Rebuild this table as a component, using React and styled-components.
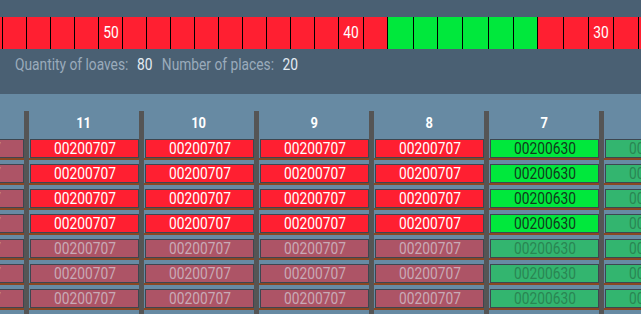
import React from "react";
import styled, { createGlobalStyle } from "styled-components";

const GlobalStyle = createGlobalStyle`
  body {
    margin: 0;
    background-color: #4a6073;
    font-family: Roboto, "Liberation Sans", sans-serif;
    overflow: hidden;
  }
`;

// left edges of the strip cells, in page pixels
const stripEdges = [
  -22, 2, 26, 50, 74, 98, 122, 146, 170, 194, 218, 242, 266, 290, 314, 338,
  363, 387, 413, 437, 462, 488, 513, 537, 563, 588, 613, 638, 663,
];
const stripCells = stripEdges.slice(0, -1).map((x, i) => ({
  num: 55 - i,
  width: stripEdges[i + 1] - x,
}));

const columns = [
  { num: 12, code: "00200707", color: "red", bright: 0 },
  { num: 11, code: "00200707", color: "red", bright: 4 },
  { num: 10, code: "00200707", color: "red", bright: 4 },
  { num: 9, code: "00200707", color: "red", bright: 4 },
  { num: 8, code: "00200707", color: "red", bright: 4 },
  { num: 7, code: "00200630", color: "green", bright: 4 },
  { num: 6, code: "00200630", color: "green", bright: 0 },
];

const cellColors = {
  red: { bg: "#ff1f31", fg: "#ffffff", dimBg: "#ad5466", dimFg: "#c8aab6" },
  green: { bg: "#00e83c", fg: "#113a1c", dimBg: "#33b56f", dimFg: "#2a8553" },
};

const App = () => {
  return (
    <Page>
      <GlobalStyle />
      <TopBar>
        <Strip>
          {stripCells.map((c) => (
            <StripCell
              key={c.num}
              $w={c.width}
              $green={c.num <= 38 && c.num >= 33}
            >
              {c.num % 10 === 0 && <Narrow>{c.num}</Narrow>}
            </StripCell>
          ))}
        </Strip>
        <Info>
          <InfoLine>
            <Label>Quantity of loaves:</Label>
            <Value>80</Value>
            <Label>Number of places:</Label>
            <Value>20</Value>
          </InfoLine>
        </Info>
      </TopBar>
      <Table>
        {columns.map((col) => (
          <Column key={col.num}>
            <Separator />
            <ColumnBody>
              <ColumnHead>
                <Narrow>{col.num}</Narrow>
              </ColumnHead>
              {Array.from({ length: 7 }).map((_, r) => {
                const p = cellColors[col.color];
                const lit = r < col.bright;
                return (
                  <Shelf key={r}>
                    <Cell $bg={lit ? p.bg : p.dimBg} $fg={lit ? p.fg : p.dimFg}>
                      <Narrow>{col.code}</Narrow>
                    </Cell>
                  </Shelf>
                );
              })}
            </ColumnBody>
          </Column>
        ))}
      </Table>
    </Page>
  );
};

const Page = styled.div`
  width: 641px;
  height: 314px;
  overflow: hidden;
`;

const TopBar = styled.div`
  height: 94px;
  padding-top: 17px;
  box-sizing: border-box;
  background-color: #4a6073;
  overflow: hidden;
`;

const Strip = styled.div`
  display: flex;
  height: 32px;
  margin-left: -22px;
`;

const StripCell = styled.div`
  flex: 0 0 ${(p) => p.$w}px;
  box-sizing: border-box;
  border-left: 1px solid #000;
  background-color: ${(p) => (p.$green ? "#00e83c" : "#ff1f31")};
  display: flex;
  align-items: center;
  justify-content: center;
  color: #ffffff;
  font-size: 16px;
  line-height: 32px;
`;

const Narrow = styled.span`
  display: inline-block;
  transform: scaleX(0.86);
  transform-origin: center;
`;

const Info = styled.div`
  margin-top: 6px;
  padding-left: 15px;
  height: 20px;
`;

const InfoLine = styled.div`
  display: inline-flex;
  white-space: nowrap;
  font-size: 16px;
  line-height: 20px;
  transform: scaleX(0.86);
  transform-origin: left center;
`;

const Label = styled.span`
  color: #9aabbb;
`;

const Value = styled.span`
  color: #e4ecf3;
  margin: 0 11px 0 10px;
`;

const Table = styled.div`
  display: flex;
  height: 220px;
  margin-left: -91px;
  background-color: #678aa3;
`;

const Column = styled.div`
  display: flex;
  flex: 0 0 115px;
`;

const Separator = styled.div`
  flex: 0 0 5px;
  margin-top: 17px;
  background-color: #555555;
`;

const ColumnBody = styled.div`
  flex: 0 0 110px;
`;

const ColumnHead = styled.div`
  height: 45px;
  box-sizing: border-box;
  padding-top: 21px;
  text-align: center;
  color: #ffffff;
  font-size: 15px;
  font-weight: 700;
  line-height: 16px;
`;

const Shelf = styled.div`
  padding-left: 1px;
  border-bottom: 2px solid #8a4722;
  margin-bottom: 4px;
`;

const Cell = styled.div`
  height: 19px;
  box-sizing: border-box;
  border: 1px solid #3d4650;
  border-bottom-color: #3d4650;
  background-color: ${(p) => p.$bg};
  color: ${(p) => p.$fg};
  font-size: 16px;
  line-height: 17px;
  text-align: center;
`;

export default App;
